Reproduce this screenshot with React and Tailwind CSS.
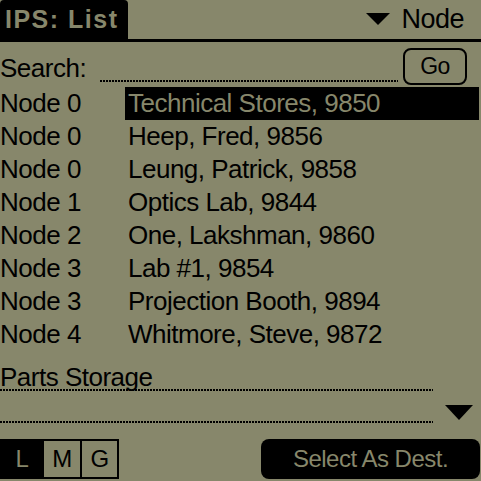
import React from "react";

const rows = [
  ["Node 0", "Technical Stores, 9850", true],
  ["Node 0", "Heep, Fred, 9856"],
  ["Node 0", "Leung, Patrick, 9858"],
  ["Node 1", "Optics Lab, 9844"],
  ["Node 2", "One, Lakshman, 9860"],
  ["Node 3", "Lab #1, 9854"],
  ["Node 3", "Projection Booth, 9894"],
  ["Node 4", "Whitmore, Steve, 9872"],
];

function Dotted({ className }) {
  return (
    <div
      className={
        "h-[2px] bg-[repeating-linear-gradient(to_right,#000_0px,#000_2px,transparent_2px,transparent_3px)] " +
        className
      }
    />
  );
}

function Tri({ className }) {
  return (
    <svg className={className} viewBox="0 0 24 12" width="24" height="12">
      <polygon points="0,0 24,0 12,12" fill="#000" />
    </svg>
  );
}

export default function App() {
  return (
    <div className="w-[481px] h-[481px] overflow-hidden bg-[#87876b] text-black font-['Liberation_Sans',Arial,sans-serif] text-[26px] tracking-[-0.5px]">
      {/* Title bar */}
      <div className="flex h-[39px]">
        <div className="w-[128px] h-full bg-black rounded-t-[4px] pl-[5px] font-bold text-[25px] tracking-[1.5px] leading-[39px] text-[#87876b]">
          IPS: List
        </div>
        <div className="ml-auto flex items-center pr-[17px]">
          <Tri className="mr-[11px] mt-[-2px]" />
          <span className="leading-[39px] text-[27px]">Node</span>
        </div>
      </div>
      <div className="h-[3px] bg-black" />

      {/* Search row */}
      <div className="flex items-start h-[45px]">
        <div className="w-[100px] mt-[10px] leading-[33px]">Search:</div>
        <Dotted className="mt-[38px] w-[298px]" />
        <div className="ml-[5px] mt-[6px] w-[64px] h-[37px] border-2 border-black rounded-[8px] flex items-center justify-center text-[23px] leading-none">
          Go
        </div>
      </div>

      {/* List */}
      <div>
        {rows.map(([n, name, sel], i) => (
          <div key={i} className="flex h-[33px] leading-[33px]">
            <div className="w-[125px]">{n}</div>
            <div
              className={
                "w-[354px] pl-[3px] " + (sel ? "bg-black text-[#87876b]" : "")
              }
            >
              {name}
            </div>
          </div>
        ))}
      </div>

      {/* Detail field */}
      <div className="h-[38px] flex items-end">
        <div className="leading-[24px]">Parts Storage</div>
      </div>
      <Dotted className="w-[433px]" />
      <div className="flex items-start h-[32px]">
        <Dotted className="mt-[30px] w-[433px]" />
        <svg className="ml-[12px] mt-[14px]" viewBox="0 0 28 15" width="28" height="15">
          <polygon points="0,0 28,0 14,15" fill="#000" />
        </svg>
      </div>

      {/* Bottom buttons */}
      <div className="mt-[16px] flex h-[40px]">
        <div className="flex w-[119px] border-2 border-black text-[24px]">
          <div className="w-[40px] bg-black text-[#87876b] flex items-center justify-center">L</div>
          <div className="w-[38px] border-l-2 border-black flex items-center justify-center">M</div>
          <div className="flex-1 border-l-2 border-black flex items-center justify-center">G</div>
        </div>
        <div className="ml-auto mr-[1px] w-[219px] bg-black rounded-[8px] text-[#87876b] flex items-center justify-center text-[24px]">
          Select As Dest.
        </div>
      </div>
    </div>
  );
}
